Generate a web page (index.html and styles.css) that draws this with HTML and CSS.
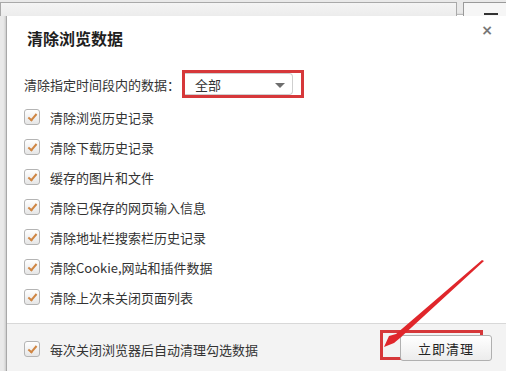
FILE: index.html
```html
<!DOCTYPE html>
<html lang="zh">
<head>
<meta charset="utf-8">
<link rel="stylesheet" href="styles.css">
</head>
<body>
<div class="topbar">
  <div class="addr"></div>
  <div class="topbtn"><span class="dash"></span></div>
</div>
<div class="dialog">
  <div class="header">
    <h1 class="title">清除浏览数据</h1>
    <span class="close">×</span>
  </div>
  <div class="range">
    <span class="range-label">清除指定时间段内的数据：</span>
    <div class="mark select-mark">
      <div class="select"><span>全部</span><i class="caret"></i></div>
    </div>
  </div>
  <ul class="opts">
    <li class="opt"><span class="cb"></span>清除浏览历史记录</li>
    <li class="opt"><span class="cb"></span>清除下载历史记录</li>
    <li class="opt"><span class="cb"></span>缓存的图片和文件</li>
    <li class="opt"><span class="cb"></span>清除已保存的网页输入信息</li>
    <li class="opt"><span class="cb"></span>清除地址栏搜索栏历史记录</li>
    <li class="opt"><span class="cb"></span>清除Cookie,网站和插件数据</li>
    <li class="opt"><span class="cb"></span>清除上次未关闭页面列表</li>
  </ul>
  <div class="footer">
    <div class="opt"><span class="cb"></span>每次关闭浏览器后自动清理勾选数据</div>
    <div class="mark btn-mark"><button class="btn">立即清理</button></div>
  </div>
</div>
<svg class="arrow" width="506" height="371" viewBox="0 0 506 371">
  <polygon points="484,261 482,260 396,334 389,336 384,347 394,343 400,338" fill="#e0262b"/>
</svg>
</body>
</html>
```
FILE: styles.css
```css
html, body { margin: 0; padding: 0; }
body {
  width: 506px; height: 371px; overflow: hidden;
  background: #e9e9e9;
  font-family: "Noto Sans CJK SC", "Liberation Sans", sans-serif;
  color: #333;
  position: relative;
}
.topbar { height: 14px; display: flex; gap: 6px; padding-top: 2px; box-sizing: border-box; }
.addr { width: 457px; height: 14px; box-sizing: border-box; border: 1px solid #a9a9a9; border-bottom: none; background: linear-gradient(#f4f4f4, #ececec); }
.topbtn { flex: 1; height: 14px; box-sizing: border-box; border: 1px solid #9a9a9a; border-bottom: none; border-right: none; background: #f6f6f6; position: relative; }
.dash { position: absolute; left: 20px; top: 10px; width: 14px; height: 2px; background: #333; }
.dialog {
  margin-left: 6px; width: 520px; height: 360px;
  background: #fff; border-left: 1px solid #a8a8a8; border-top: 1px solid #b9b9b9;
  box-shadow: -1px 0 2px rgba(0,0,0,0.15);
  display: flex; flex-direction: column;
}
.header { height: 54px; display: flex; align-items: flex-start; padding-left: 20px; padding-right: 34px; box-sizing: border-box; }
.title { margin: 12px 0 0; font-size: 16px; font-weight: bold; color: #1e1e1e; line-height: 22px; flex: 1; }
.close { margin-top: 6px; font-size: 14px; color: #777; line-height: 18px; font-family: "DejaVu Sans", sans-serif; font-weight: bold; }
.range { height: 30px; display: flex; align-items: center; padding-left: 17px; font-size: 13px; }
.range-label { color: #333; margin-right: 2px; }
.mark { border: 3px solid #d6383a; }
.select-mark { width: 116px; height: 22px; padding: 0; }
.select { width: 108px; height: 22px; box-sizing: border-box; border: 1px solid #cfcfcf; border-left: none; border-radius: 0 4px 4px 0; display: flex; align-items: center; padding-left: 10px; font-size: 13px; color: #333; position: relative; }
.caret { position: absolute; right: 7px; top: 9px; border-left: 5px solid transparent; border-right: 5px solid transparent; border-top: 5px solid #6e6e6e; }
.opts { list-style: none; margin: 3px 0 0; padding: 0; }
.opt { height: 30px; display: flex; align-items: center; padding-left: 17px; font-size: 13px; color: #333; }
.cb {
  width: 16px; height: 16px; box-sizing: border-box; margin-right: 10px;
  border: 1px solid #b4b4b4; border-radius: 3px;
  background: linear-gradient(#ffffff, #e6e6e6);
  position: relative; flex: none;
}
.cb::after {
  content: ""; position: absolute; left: 5px; top: 2px; width: 3px; height: 7px;
  border-right: 2px solid #d08643; border-bottom: 2px solid #d08643;
  transform: rotate(40deg);
}
.footer {
  margin-top: 11px; border-top: 1px solid #d8d8d8; background: #f3f3f3;
  flex: 1; display: flex; align-items: flex-start; padding-top: 10px;
}
.footer .opt { flex: 1; height: 30px; }
.btn-mark { margin-right: 44px; margin-top: -4px; width: 97px; height: 24px; position: relative; }
.btn {
  position: absolute; left: 17px; top: 2px; width: 92px; height: 26px;
  border: 1px solid #b0b0b0; border-radius: 3px; background: linear-gradient(#ffffff, #ececec);
  font-family: "Noto Sans CJK SC", sans-serif; font-size: 13px; color: #222; padding: 0; letter-spacing: 1px;
}
.arrow { position: absolute; left: 0; top: 0; pointer-events: none; }
```
